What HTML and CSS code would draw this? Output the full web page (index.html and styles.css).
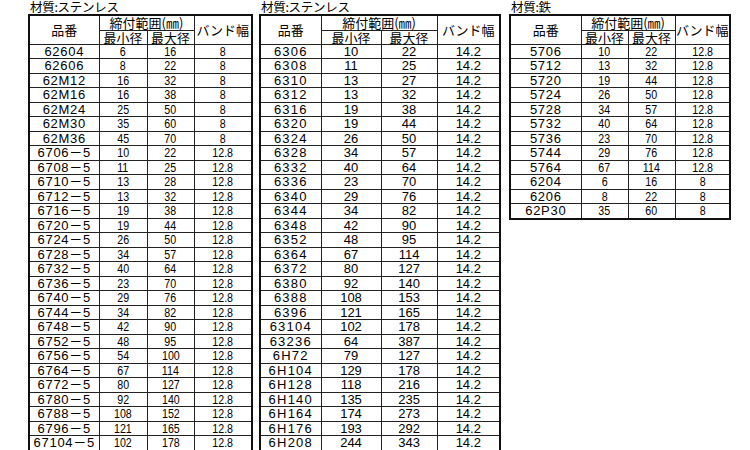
FILE: index.html
```html
<!DOCTYPE html>
<html lang="ja">
<head>
<meta charset="utf-8">
<link rel="stylesheet" href="styles.css">
</head>
<body>
<div class="sheet">
  <section class="block b1">
    <div class="title">材質:ステンレス</div>
    <table class="spec">
      <colgroup><col class="c-no"><col class="c-min"><col class="c-max"><col class="c-band"></colgroup>
      <thead>
        <tr class="h1"><th rowspan="2">品番</th><th colspan="2">締付範囲(㎜)</th><th rowspan="2">バンド幅</th></tr>
        <tr class="h2"><th>最小径</th><th>最大径</th></tr>
      </thead>
      <tbody id="t1"></tbody>
    </table>
  </section>
  <section class="block b2">
    <div class="title">材質:ステンレス</div>
    <table class="spec">
      <colgroup><col class="c-no"><col class="c-min"><col class="c-max"><col class="c-band"></colgroup>
      <thead>
        <tr class="h1"><th rowspan="2">品番</th><th colspan="2">締付範囲(㎜)</th><th rowspan="2">バンド幅</th></tr>
        <tr class="h2"><th>最小径</th><th>最大径</th></tr>
      </thead>
      <tbody id="t2"></tbody>
    </table>
  </section>
  <section class="block b3">
    <div class="title">材質:鉄</div>
    <table class="spec">
      <colgroup><col class="c-no"><col class="c-min"><col class="c-max"><col class="c-band"></colgroup>
      <thead>
        <tr class="h1"><th rowspan="2">品番</th><th colspan="2">締付範囲(㎜)</th><th rowspan="2">バンド幅</th></tr>
        <tr class="h2"><th>最小径</th><th>最大径</th></tr>
      </thead>
      <tbody id="t3"></tbody>
    </table>
  </section>
</div>
<script src="app.js"></script>
</body>
</html>
```
FILE: styles.css
```css
html, body {
  margin: 0;
  padding: 0;
  background: #fff;
}
body {
  width: 750px;
  height: 450px;
  overflow: hidden;
  font-family: "Liberation Sans", "Noto Sans CJK JP", sans-serif;
  color: #000;
}
.sheet {
  display: flex;
  align-items: flex-start;
  padding-left: 28px;
}
.block { flex: none; }
.b2 { margin-left: 6px; }
.b3 { margin-left: 8px; }
.title {
  height: 14px;
  line-height: 14px;
  font-family: "Noto Sans CJK JP", sans-serif;
  font-size: 12.5px;
  padding-left: 2px;
  letter-spacing: -0.3px;
}
.spec {
  border-collapse: collapse;
  table-layout: fixed;
  border: 2px solid #111;
}
.spec th, .spec td {
  border: 1px solid #222;
  padding: 0;
  text-align: center;
  white-space: nowrap;
}
.spec th {
  font-family: "Noto Sans CJK JP", sans-serif;
  font-weight: normal;
  font-size: 13px;
  line-height: 13px;
}
.h1 { height: 15px; }
.h2 { height: 14px; }
.spec td {
  height: 13.5px;
  font-size: 13px;
  line-height: 13px;
}
.spec td.no { letter-spacing: 0.7px; }
.spec td span {
  display: inline-block;
  transform: scaleX(0.82);
}
.b1 .spec { width: 223px; }
.b1 .c-no { width: 70px; }
.b1 .c-min { width: 48px; }
.b1 .c-max { width: 47px; }
.b1 .c-band { width: 58px; }
.b2 .spec { width: 240px; }
.b2 .c-no { width: 61px; }
.b2 .c-min { width: 60px; }
.b2 .c-max { width: 56px; }
.b2 .c-band { width: 63px; }
.b2 .spec td.no { letter-spacing: 1.2px; }
.b2 .spec td span { transform: scaleX(1); }
.b3 .spec { width: 220px; }
.b3 .c-no { width: 71px; }
.b3 .c-min { width: 47px; }
.b3 .c-max { width: 47px; }
.b3 .c-band { width: 55px; }
```
FILE: app.js
```js
var D1 = [
["62604","6","16","8"],["62606","8","22","8"],["62M12","16","32","8"],["62M16","16","38","8"],
["62M24","25","50","8"],["62M30","35","60","8"],["62M36","45","70","8"],
["6706－5","10","22","12.8"],["6708－5","11","25","12.8"],["6710－5","13","28","12.8"],
["6712－5","13","32","12.8"],["6716－5","19","38","12.8"],["6720－5","19","44","12.8"],
["6724－5","26","50","12.8"],["6728－5","34","57","12.8"],["6732－5","40","64","12.8"],
["6736－5","23","70","12.8"],["6740－5","29","76","12.8"],["6744－5","34","82","12.8"],
["6748－5","42","90","12.8"],["6752－5","48","95","12.8"],["6756－5","54","100","12.8"],
["6764－5","67","114","12.8"],["6772－5","80","127","12.8"],["6780－5","92","140","12.8"],
["6788－5","108","152","12.8"],["6796－5","121","165","12.8"],["67104－5","102","178","12.8"]
];
var D2 = [
["6306","10","22"],["6308","11","25"],["6310","13","27"],["6312","13","32"],["6316","19","38"],
["6320","19","44"],["6324","26","50"],["6328","34","57"],["6332","40","64"],["6336","23","70"],
["6340","29","76"],["6344","34","82"],["6348","42","90"],["6352","48","95"],["6364","67","114"],
["6372","80","127"],["6380","92","140"],["6388","108","153"],["6396","121","165"],["63104","102","178"],
["63236","64","387"],["6H72","79","127"],["6H104","129","178"],["6H128","118","216"],
["6H140","135","235"],["6H164","174","273"],["6H176","193","292"],["6H208","244","343"]
].map(function (r) { return r.concat(["14.2"]); });
var D3 = [
["5706","10","22","12.8"],["5712","13","32","12.8"],["5720","19","44","12.8"],["5724","26","50","12.8"],
["5728","34","57","12.8"],["5732","40","64","12.8"],["5736","23","70","12.8"],["5744","29","76","12.8"],
["5764","67","114","12.8"],["6204","6","16","8"],["6206","8","22","8"],["62P30","35","60","8"]
];
function fill(id, rows) {
  var tb = document.getElementById(id);
  var html = "";
  rows.forEach(function (r) {
    html += "<tr><td class=\"no\">" + r[0] + "</td>";
    for (var i = 1; i < 4; i++) html += "<td><span>" + r[i] + "</span></td>";
    html += "</tr>";
  });
  tb.innerHTML = html;
}
fill("t1", D1);
fill("t2", D2);
fill("t3", D3);
```
